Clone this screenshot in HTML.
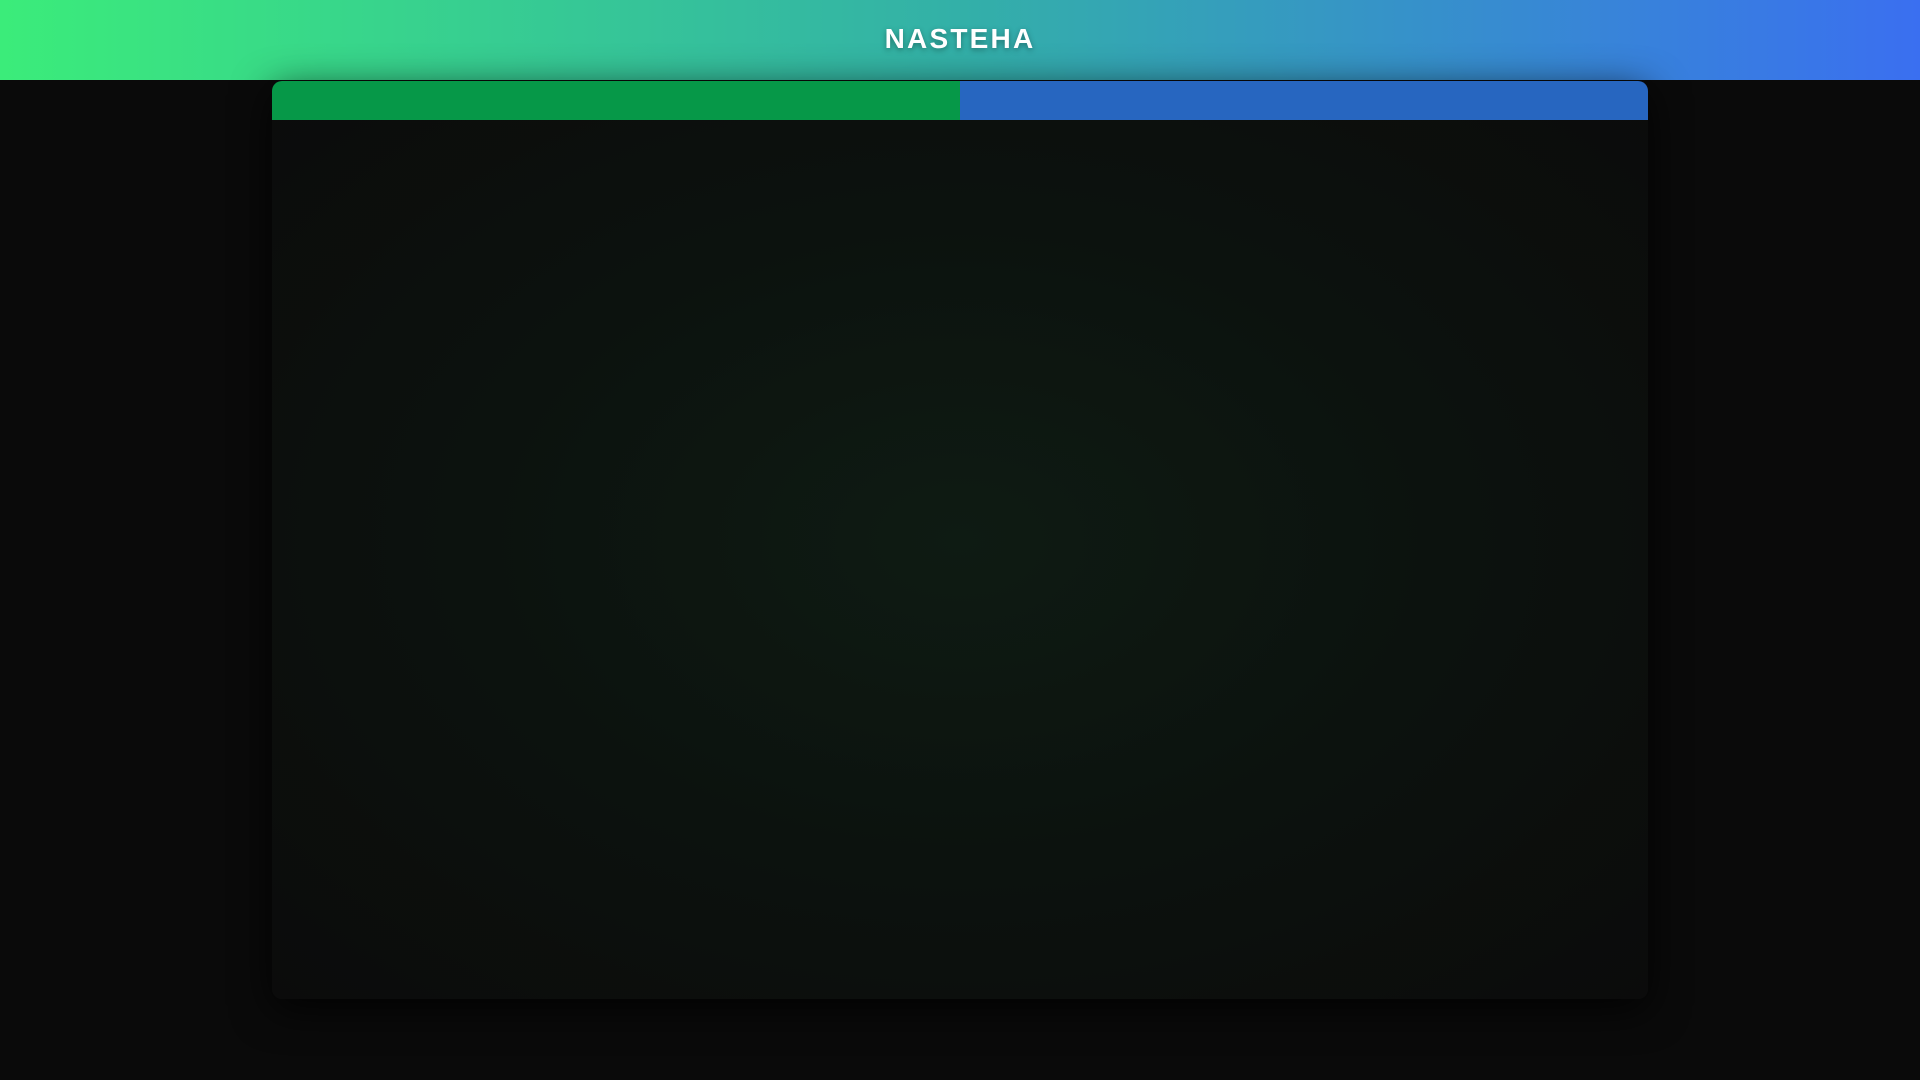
<!DOCTYPE html>
<html><head><meta charset="utf-8"><style>
html,body{margin:0;padding:0;width:1920px;height:1080px;overflow:hidden;background:#0a0a0a;font-family:"Liberation Sans",sans-serif}
.hdr{position:absolute;left:0;top:0;width:1920px;height:80px;background:linear-gradient(90deg,#3bec7a,#33b0a8 50%,#3a6ff0);border-bottom:1px solid #0a0a0a}
.hdr h1{margin:0;position:absolute;width:100%;top:22px;text-align:center;color:#fff;font-size:28px;font-weight:bold;letter-spacing:2.2px;line-height:34px;text-shadow:0 2px 6px rgba(0,0,0,.35)}
.panel{position:absolute;left:272px;top:81px;width:1376px;height:918px;border-radius:10px;overflow:hidden;background:radial-gradient(ellipse at 50% 50%,#0e1b13 0%,#0c120e 50%,#0b0b0b 100%);box-shadow:0 10px 40px rgba(0,0,0,.8)}
.tabs{display:flex;height:39px}
.tabs div{flex:1}
.g{background:#069848}.b{background:#2766c0}
</style></head><body>
<div class="hdr"><h1>NASTEHA</h1></div>
<div class="panel"><div class="tabs"><div class="g"></div><div class="b"></div></div></div>
</body></html>
